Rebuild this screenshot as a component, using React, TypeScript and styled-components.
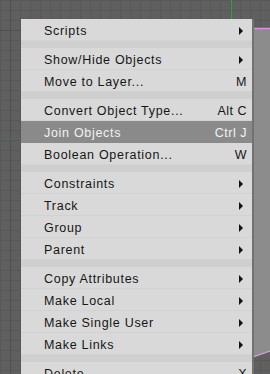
import * as React from 'react'
import styled, { createGlobalStyle } from 'styled-components'

type Entry =
    | { kind: 'sep' }
    | { kind: 'item'; label: string; shortcut?: string; submenu?: boolean; active?: boolean }

const entries: Entry[] = [
    { kind: 'item', label: 'Scripts', submenu: true },
    { kind: 'sep' },
    { kind: 'item', label: 'Show/Hide Objects', submenu: true },
    { kind: 'item', label: 'Move to Layer...', shortcut: 'M' },
    { kind: 'sep' },
    { kind: 'item', label: 'Convert Object Type...', shortcut: 'Alt C' },
    { kind: 'item', label: 'Join Objects', shortcut: 'Ctrl J', active: true },
    { kind: 'item', label: 'Boolean Operation...', shortcut: 'W' },
    { kind: 'sep' },
    { kind: 'item', label: 'Constraints', submenu: true },
    { kind: 'item', label: 'Track', submenu: true },
    { kind: 'item', label: 'Group', submenu: true },
    { kind: 'item', label: 'Parent', submenu: true },
    { kind: 'sep' },
    { kind: 'item', label: 'Copy Attributes', submenu: true },
    { kind: 'item', label: 'Make Local', submenu: true },
    { kind: 'item', label: 'Make Single User', submenu: true },
    { kind: 'item', label: 'Make Links', submenu: true },
    { kind: 'sep' },
    { kind: 'item', label: 'Delete', shortcut: 'X' },
]

const GlobalStyle = createGlobalStyle`
    html, body {
        margin: 0;
        padding: 0;
        background: #5e5e5e;
    }
`

// 3D viewport with its faint grid
const Viewport = styled.div`
    position: relative;
    width: 270px;
    height: 374px;
    overflow: hidden;
    background-color: #5f5f5f;
    background-image:
        linear-gradient(to right, #585858 1px, transparent 1px),
        linear-gradient(to bottom, #585858 1px, transparent 1px);
    background-size: 10px 10px;
    font-family: 'Liberation Sans', Arial, sans-serif;
`

const Scene = styled.svg`
    position: absolute;
    inset: 0;
`

const Menu = styled.ul`
    position: absolute;
    left: 21px;
    top: 19px;
    width: 231px;
    margin: 0;
    padding: 0;
    list-style: none;
    background: #d9d9d9;
    box-shadow: 2px 0 0 #727272;
`

const Row = styled.li<{ $active?: boolean }>`
    display: flex;
    align-items: center;
    justify-content: space-between;
    height: 22px;
    padding: 1px 5px 0 23px;
    box-sizing: border-box;
    font-size: 12.5px;
    letter-spacing: 0.7px;
    color: ${p => (p.$active ? '#f2f2f2' : '#161616')};
    background: ${p => (p.$active ? '#8a8a8a' : '#d9d9d9')};
    box-shadow: inset 0 -1px 0 ${p => (p.$active ? '#8a8a8a' : '#d2d2d2')};
    white-space: nowrap;
`

const Separator = styled.li`
    height: 7px;
    background: #cfcfcf;
`

const Shortcut = styled.span`
    letter-spacing: 0.5px;
`

const Arrow = styled.span`
    width: 0;
    height: 0;
    margin-right: 4px;
    border-left: 4px solid #111;
    border-top: 4px solid transparent;
    border-bottom: 4px solid transparent;
`

const SceneLines = () => (
    <Scene width={270} height={374} viewBox="0 0 270 374">
        <line x1={10.5} y1={0} x2={10.5} y2={374} stroke="#515151" />
        <line x1={0} y1={30.5} x2={270} y2={30.5} stroke="#515151" />
        <polygon points="230,29 270,29 270,351 230,366" fill="#8c8c8c" />
        <line x1={230} y1={28.5} x2={270} y2={28.5} stroke="#e48ae4" strokeWidth={1.5} />
        <line x1={250} y1={358} x2={270} y2={351} stroke="#d8a0d8" strokeWidth={1.3} />
        <line x1={231.5} y1={0} x2={231.5} y2={20} stroke="#3f9a3f" strokeWidth={1.2} />
        <line x1={0} y1={139.5} x2={22} y2={139.5} stroke="#9a4a4a" />
    </Scene>
)

const App = () => (
    <Viewport>
        <GlobalStyle />
        <SceneLines />
        <Menu>
            {entries.map((e, i) =>
                e.kind === 'sep' ? (
                    <Separator key={i} />
                ) : (
                    <Row key={i} $active={e.active}>
                        <span>{e.label}</span>
                        {e.submenu ? <Arrow /> : <Shortcut>{e.shortcut}</Shortcut>}
                    </Row>
                )
            )}
        </Menu>
    </Viewport>
)

export default App
